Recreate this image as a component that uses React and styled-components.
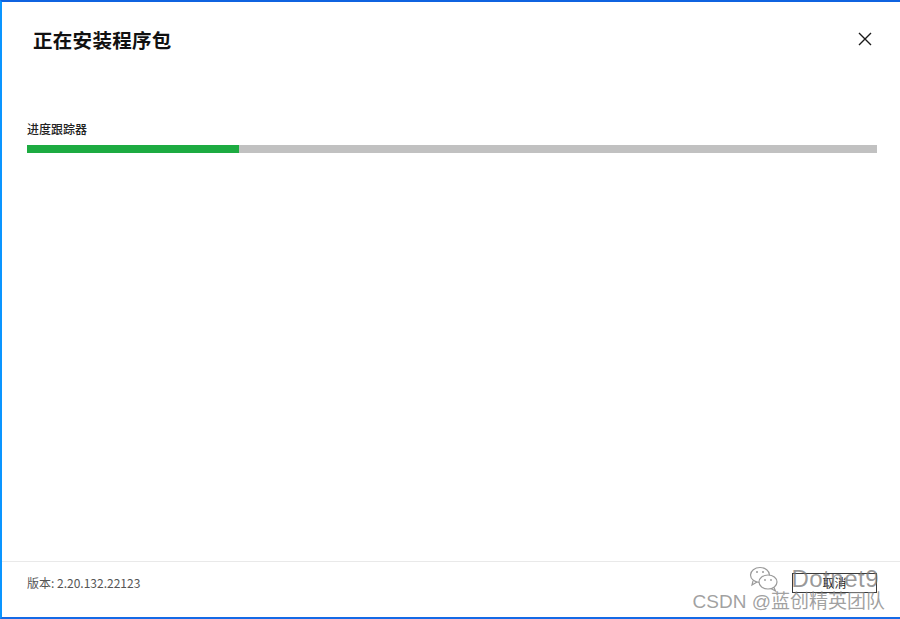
import React from "react";
import styled, { createGlobalStyle } from "styled-components";

const GlobalStyle = createGlobalStyle`
  html, body {
    margin: 0;
    padding: 0;
    background: #ffffff;
  }
  body {
    font-family: "Noto Sans CJK SC", "Noto Sans", sans-serif;
  }
`;

function CloseIcon() {
  return (
    <svg width="14" height="14" viewBox="0 0 14 14">
      <path d="M1 1L13 13M13 1L1 13" stroke="#1a1a1a" strokeWidth="1.4" />
    </svg>
  );
}

function WechatIcon() {
  return (
    <svg width="30" height="26" viewBox="0 0 30 26" fill="none" stroke="#9a9a9a" strokeWidth="1.2">
      <ellipse cx="11" cy="9" rx="9.5" ry="7.5" />
      <path d="M4 15L3 19L8 16" />
      <ellipse cx="19" cy="16" rx="9" ry="7" fill="#fff" />
      <path d="M25 21.5L26.5 25L22 22.5" />
      <circle cx="8" cy="6" r="1" fill="#9a9a9a" stroke="none" />
      <circle cx="14" cy="6" r="1" fill="#9a9a9a" stroke="none" />
      <circle cx="16" cy="14" r="0.9" fill="#9a9a9a" stroke="none" />
      <circle cx="22" cy="14" r="0.9" fill="#9a9a9a" stroke="none" />
    </svg>
  );
}

export default function App() {
  return (
    <>
      <GlobalStyle />
      <Window>
        <Header>
          <Title>正在安装程序包</Title>
          <CloseButton>
            <CloseIcon />
          </CloseButton>
        </Header>
        <Body>
          <Label>进度跟踪器</Label>
          <Track>
            <Fill style={{ width: `${(212 / 850) * 100}%` }} />
          </Track>
        </Body>
        <Footer>
          <Version>版本: 2.20.132.22123</Version>
          <CancelButton>取消</CancelButton>
          <Watermark>
            <Brand>
              <WechatIcon />
              <BrandText>Dotnet9</BrandText>
            </Brand>
            <Credit>CSDN @蓝创精英团队</Credit>
          </Watermark>
        </Footer>
      </Window>
    </>
  );
}

const Window = styled.div`
  box-sizing: border-box;
  width: 900px;
  height: 619px;
  display: flex;
  flex-direction: column;
  background: #ffffff;
  border-top: 2px solid #0f63e0;
  border-left: 2px solid #0a95ff;
  border-bottom: 2px solid #156ae6;
  overflow: hidden;
`;

const Header = styled.div`
  display: flex;
  align-items: center;
  justify-content: space-between;
  height: 74px;
  padding: 0 27px 0 31px;
`;

const Title = styled.h1`
  margin: 0;
  font-size: 19.5px;
  font-weight: 700;
  color: #111111;
  letter-spacing: 0.3px;
`;

const CloseButton = styled.div`
  display: flex;
  align-items: center;
  justify-content: center;
  width: 16px;
  height: 16px;
`;

const Body = styled.div`
  flex: 1;
  display: flex;
  flex-direction: column;
  padding: 45px 23px 0 25px;
`;

const Label = styled.div`
  font-size: 12px;
  font-weight: 500;
  color: #222222;
  line-height: 16px;
  margin-bottom: 8px;
`;

const Track = styled.div`
  height: 8px;
  background: #c1c1c1;
`;

const Fill = styled.div`
  height: 100%;
  background: #1dab41;
`;

const Footer = styled.div`
  box-sizing: border-box;
  position: relative;
  display: flex;
  align-items: center;
  justify-content: space-between;
  height: 56px;
  flex-shrink: 0;
  padding: 0 23px 14px 25px;
  border-top: 1px solid #e9e9e9;
`;

const Version = styled.div`
  font-size: 12px;
  color: #555555;
`;

const CancelButton = styled.div`
  box-sizing: border-box;
  width: 85px;
  height: 20px;
  display: flex;
  align-items: center;
  justify-content: center;
  border: 1px solid #3a3a3a;
  font-size: 12px;
  color: #222222;
`;

const Watermark = styled.div`
  position: absolute;
  right: 15px;
  top: 4px;
  display: flex;
  flex-direction: column;
  align-items: flex-end;
  pointer-events: none;
`;

const Brand = styled.div`
  display: flex;
  align-items: center;
  gap: 12px;
  margin-right: 6px;
  height: 26px;
`;

const BrandText = styled.span`
  font-family: "Liberation Sans", Arial, sans-serif;
  font-size: 24px;
  color: rgba(120, 120, 120, 0.75);
  letter-spacing: 0.5px;
`;

const Credit = styled.span`
  font-family: "Liberation Sans", "Noto Sans CJK SC", sans-serif;
  font-size: 19px;
  line-height: 20px;
  color: rgba(130, 130, 130, 0.75);
`;
